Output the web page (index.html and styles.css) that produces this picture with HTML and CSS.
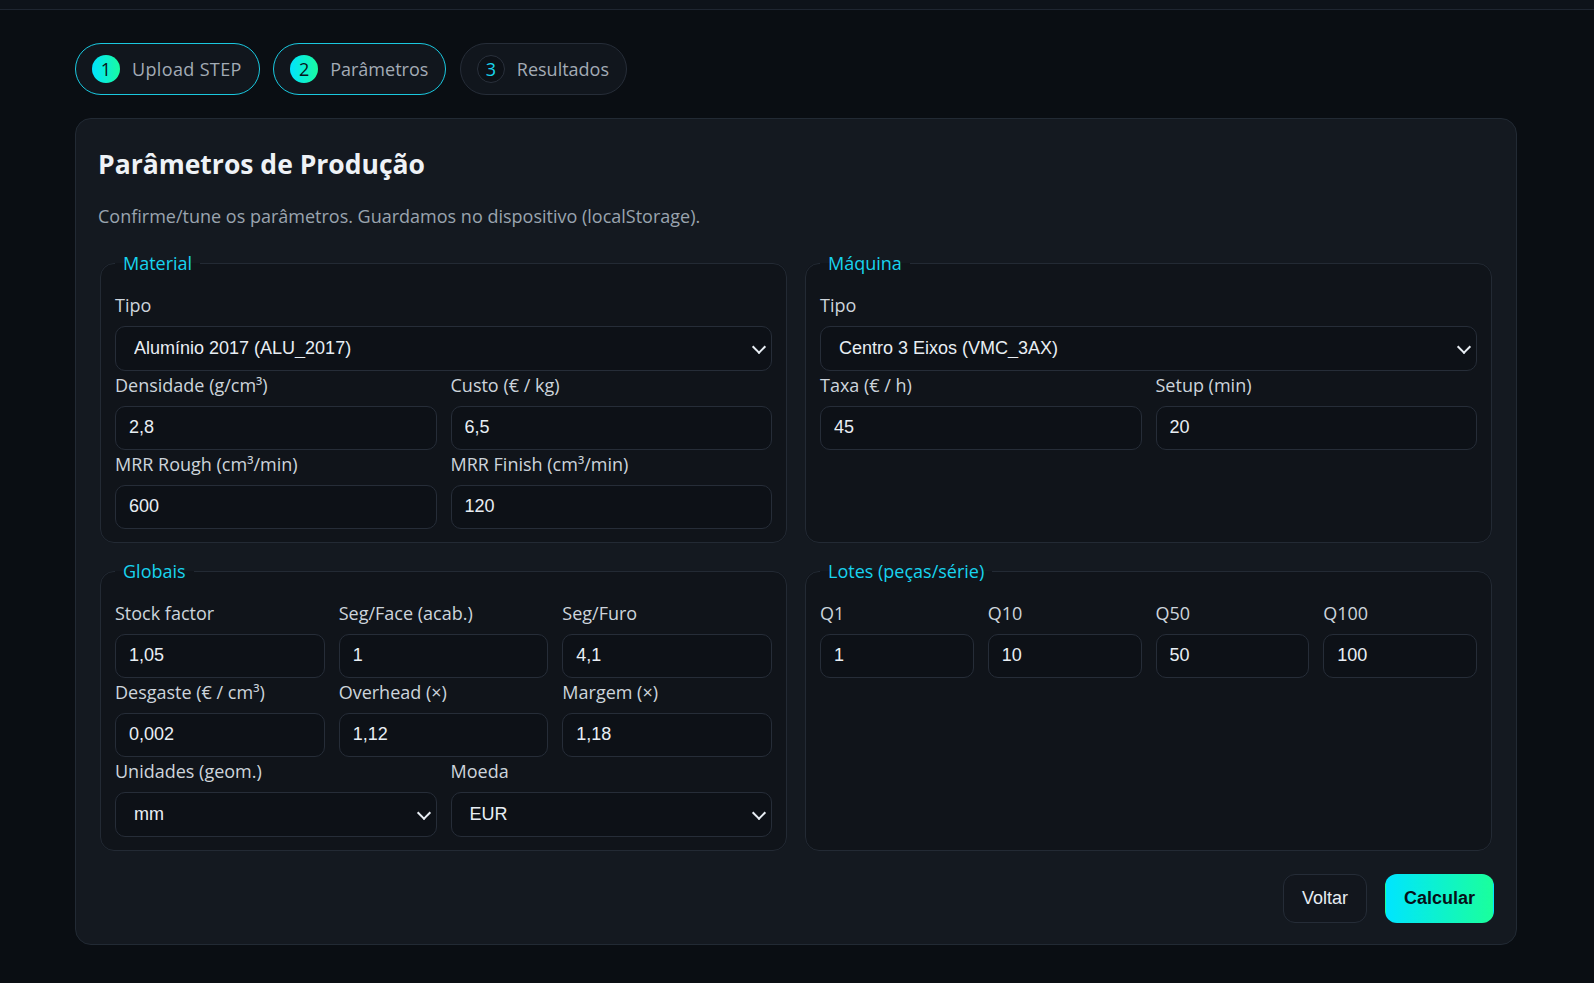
FILE: index.html
```html
<!DOCTYPE html>
<html lang="pt">
<head>
<meta charset="utf-8">
<title>Parâmetros de Produção</title>
<link rel="stylesheet" href="styles.css">
</head>
<body>
<header class="topbar"></header>
<main class="page">
  <nav class="steps">
    <div class="step is-done"><span class="step-num">1</span><span class="step-label">Upload STEP</span></div>
    <div class="step is-active"><span class="step-num">2</span><span class="step-label">Parâmetros</span></div>
    <div class="step"><span class="step-num">3</span><span class="step-label">Resultados</span></div>
  </nav>

  <section class="card">
    <h2 class="card-title">Parâmetros de Produção</h2>
    <p class="card-sub">Confirme/tune os parâmetros. Guardamos no dispositivo (localStorage).</p>

    <div class="param-grid">
      <fieldset class="group">
        <legend>Material</legend>
        <div class="group-body">
          <div class="field">
            <label>Tipo</label>
            <div class="select-wrap"><select class="select"><option>Alumínio 2017 (ALU_2017)</option></select></div>
          </div>
          <div class="row cols-2">
            <div class="field"><label>Densidade (g/cm³)</label><input class="input" value="2,8"></div>
            <div class="field"><label>Custo (€ / kg)</label><input class="input" value="6,5"></div>
          </div>
          <div class="row cols-2">
            <div class="field"><label>MRR Rough (cm³/min)</label><input class="input" value="600"></div>
            <div class="field"><label>MRR Finish (cm³/min)</label><input class="input" value="120"></div>
          </div>
        </div>
      </fieldset>

      <fieldset class="group">
        <legend>Máquina</legend>
        <div class="group-body">
          <div class="field">
            <label>Tipo</label>
            <div class="select-wrap"><select class="select"><option>Centro 3 Eixos (VMC_3AX)</option></select></div>
          </div>
          <div class="row cols-2">
            <div class="field"><label>Taxa (€ / h)</label><input class="input" value="45"></div>
            <div class="field"><label>Setup (min)</label><input class="input" value="20"></div>
          </div>
        </div>
      </fieldset>

      <fieldset class="group">
        <legend>Globais</legend>
        <div class="group-body">
          <div class="row cols-3">
            <div class="field"><label>Stock factor</label><input class="input" value="1,05"></div>
            <div class="field"><label>Seg/Face (acab.)</label><input class="input" value="1"></div>
            <div class="field"><label>Seg/Furo</label><input class="input" value="4,1"></div>
          </div>
          <div class="row cols-3">
            <div class="field"><label>Desgaste (€ / cm³)</label><input class="input" value="0,002"></div>
            <div class="field"><label>Overhead (×)</label><input class="input" value="1,12"></div>
            <div class="field"><label>Margem (×)</label><input class="input" value="1,18"></div>
          </div>
          <div class="row cols-2">
            <div class="field">
              <label>Unidades (geom.)</label>
              <div class="select-wrap"><select class="select"><option>mm</option></select></div>
            </div>
            <div class="field">
              <label>Moeda</label>
              <div class="select-wrap"><select class="select"><option>EUR</option></select></div>
            </div>
          </div>
        </div>
      </fieldset>

      <fieldset class="group">
        <legend>Lotes (peças/série)</legend>
        <div class="group-body">
          <div class="row cols-4">
            <div class="field"><label>Q1</label><input class="input" value="1"></div>
            <div class="field"><label>Q10</label><input class="input" value="10"></div>
            <div class="field"><label>Q50</label><input class="input" value="50"></div>
            <div class="field"><label>Q100</label><input class="input" value="100"></div>
          </div>
        </div>
      </fieldset>
    </div>

    <div class="actions">
      <button class="btn btn-ghost">Voltar</button>
      <button class="btn btn-primary">Calcular</button>
    </div>
  </section>
</main>
</body>
</html>
```

FILE: styles.css
```css
* {
  box-sizing: border-box;
}

body {
  margin: 0;
  background: #0a0e13;
  color: #e6edf3;
  font-family: "Open Sans", "Noto Sans", sans-serif;
  font-size: 18px;
  line-height: 24px;
}

.topbar {
  height: 10px;
  background: #0e131a;
  border-bottom: 1px solid #1f2631;
}

.page {
  padding: 33px 77px 40px 75px;
}

/* Steps */
.steps {
  display: flex;
  gap: 13.5px;
  margin-bottom: 23px;
}

.step {
  display: flex;
  align-items: center;
  gap: 12px;
  height: 52px;
  padding: 0 17px 0 16px;
  border: 1px solid #262d38;
  border-radius: 999px;
  background: #11161d;
  color: #a3abb5;
}

.step.is-done .step-label {
  letter-spacing: 0.35px;
}

.step.is-done,
.step.is-active {
  border-color: #1ac8df;
}

.step-num {
  width: 28px;
  height: 28px;
  border-radius: 50%;
  display: flex;
  align-items: center;
  justify-content: center;
  font-size: 18px;
  background: #0d1117;
  border: 1px solid #29303b;
  color: #18d4ee;
}

.step.is-done .step-num,
.step.is-active .step-num {
  border: none;
  background: linear-gradient(90deg, #00e3ff, #19fca0);
  color: #06131a;
}

/* Card */
.card {
  background: #141920;
  border: 1px solid #222a34;
  border-radius: 16px;
  padding: 27px 22px 21px;
}

.card-title {
  margin: 0;
  font-size: 26.5px;
  font-weight: 700;
  line-height: 36px;
  color: #eef2f6;
}

.card-sub {
  margin: 22px 0 23px;
  color: #9aa4af;
}

.param-grid {
  display: grid;
  grid-template-columns: 1fr 1fr;
  column-gap: 14px;
  row-gap: 16px;
}

.group {
  margin: 0 2px;
  padding: 18.5px 14px 13.5px;
  border: 1px solid #232a34;
  border-radius: 14px;
  background: #10141a;
  min-width: 0;
}

.group legend {
  padding: 0 8px;
  color: #18d3ee;
  font-size: 18px;
  line-height: 24px;
}

.group-body {
  display: grid;
  row-gap: 3px;
}

.row {
  display: grid;
  column-gap: 14px;
}

.cols-2 { grid-template-columns: repeat(2, 1fr); }
.cols-3 { grid-template-columns: repeat(3, 1fr); }
.cols-4 { grid-template-columns: repeat(4, 1fr); }

.field {
  min-width: 0;
}

.field label {
  display: block;
  margin-bottom: 10px;
  color: #cdd4dc;
  line-height: 22px;
}

.input,
.select {
  display: block;
  width: 100%;
  background: #0d1117;
  border: 1px solid #262d38;
  border-radius: 10px;
  color: #e8eef4;
  font-family: "Liberation Sans", Arial, sans-serif;
  font-size: 18px;
  outline: none;
}

.input {
  height: 44px;
  padding: 0 13px;
}

.select-wrap {
  position: relative;
}

.select {
  appearance: none;
  -webkit-appearance: none;
  height: 45px;
  padding: 0 40px 0 18px;
}

.select-wrap::after {
  content: "";
  position: absolute;
  right: 8px;
  top: calc(50% - 6px);
  width: 8px;
  height: 8px;
  border-right: 2px solid #e8eef4;
  border-bottom: 2px solid #e8eef4;
  transform: rotate(45deg);
  pointer-events: none;
}

/* Actions */
.actions {
  display: flex;
  justify-content: flex-end;
  gap: 18px;
  margin-top: 23px;
}

.btn {
  height: 49px;
  padding: 0 18px;
  border-radius: 12px;
  border: 1px solid transparent;
  font-family: "Liberation Sans", Arial, sans-serif;
  font-size: 18px;
  cursor: pointer;
}

.btn-ghost {
  background: #12161d;
  border-color: #252c37;
  color: #e6edf3;
}

.btn-primary {
  background: linear-gradient(90deg, #00e5ff, #1aff9c);
  color: #071018;
  font-weight: 700;
}
```
